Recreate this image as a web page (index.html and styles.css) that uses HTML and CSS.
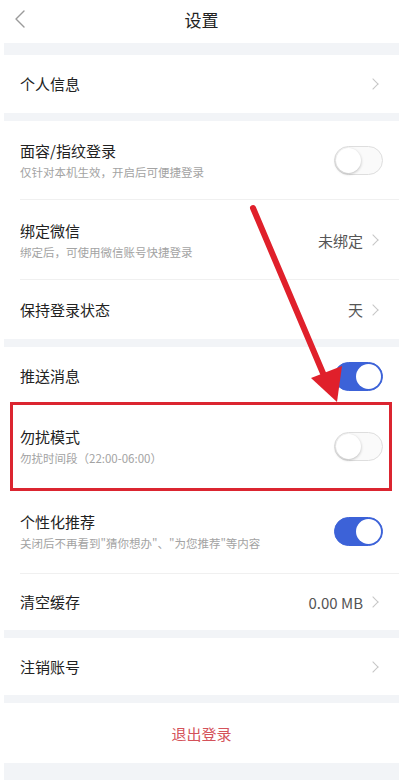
FILE: index.html
```html
<!DOCTYPE html>
<html lang="zh-CN">
<head>
<meta charset="utf-8">
<link rel="stylesheet" href="styles.css">
</head>
<body>
<div class="page">
  <header class="topbar">
    <svg class="back" width="12" height="20" viewBox="0 0 12 20"><path d="M10 2 L2 10 L10 18" fill="none" stroke="#9a9a9a" stroke-width="1.4" stroke-linecap="round" stroke-linejoin="round"/></svg>
    <div class="title">设置</div>
  </header>
  <div class="gap gap-top"></div>

  <div class="row h58">
    <div class="main"><div class="t">个人信息</div></div>
    <span class="chev"></span>
  </div>
  <div class="gap"></div>

  <div class="row h79 line">
    <div class="main"><div class="t">面容/指纹登录</div><div class="s">仅针对本机生效，开启后可便捷登录</div></div>
    <span class="toggle"></span>
  </div>
  <div class="row h80 line">
    <div class="main"><div class="t">绑定微信</div><div class="s">绑定后，可使用微信账号快捷登录</div></div>
    <span class="val">未绑定</span><span class="chev"></span>
  </div>
  <div class="row h59">
    <div class="main"><div class="t">保持登录状态</div></div>
    <span class="val">天</span><span class="chev"></span>
  </div>
  <div class="gap"></div>

  <div class="row h58">
    <div class="main"><div class="t">推送消息</div></div>
    <span class="toggle on"></span>
  </div>
  <div class="row h83">
    <div class="main"><div class="t">勿扰模式</div><div class="s">勿扰时间段（22:00-06:00）</div></div>
    <span class="toggle"></span>
  </div>
  <div class="row h86 line">
    <div class="main"><div class="t">个性化推荐</div><div class="s">关闭后不再看到"猜你想办"、"为您推荐"等内容</div></div>
    <span class="toggle on"></span>
  </div>
  <div class="row h56">
    <div class="main"><div class="t">清空缓存</div></div>
    <span class="val">0.00 MB</span><span class="chev"></span>
  </div>
  <div class="gap"></div>

  <div class="row h57">
    <div class="main"><div class="t">注销账号</div></div>
    <span class="chev"></span>
  </div>
  <div class="gap"></div>

  <div class="logout">退出登录</div>
  <div class="gap bottom"></div>

  <div class="markbox"></div>
  <svg class="arrow" width="399" height="780" viewBox="0 0 399 780">
    <line x1="253" y1="208" x2="328" y2="385" stroke="#e0202b" stroke-width="6" stroke-linecap="round"/>
    <polygon points="311,378 342,366 337,402" fill="#e0202b"/>
  </svg>
</div>
</body>
</html>
```

FILE: styles.css
```css
* { box-sizing: border-box; }
html, body { margin: 0; padding: 0; background: #fff; }
body {
  font-family: "Noto Sans CJK SC", "Noto Sans", sans-serif;
  color: #222;
}
.page {
  position: relative;
  width: 399px;
  height: 780px;
  overflow: hidden;
  padding-left: 4px;
}
.topbar {
  position: relative;
  height: 43px;
  display: flex;
  align-items: center;
  justify-content: center;
}
.back { position: absolute; left: 10px; top: 9px; }
.title { font-size: 17px; color: #222; margin-top: -4px; }
.gap { background: #f2f4f7; height: 8px; }
.gap-top { height: 12px; }
.bottom { height: 17px; }
.row {
  display: flex;
  align-items: center;
  padding: 0 16px 0 16px;
  position: relative;
  background: #fff;
}
.row.line::after {
  content: "";
  position: absolute;
  left: 16px;
  right: 0;
  bottom: 0;
  height: 1px;
  background: #f0f0f0;
}
.h56 { height: 56px; }
.h57 { height: 57px; }
.h58 { height: 58px; }
.h59 { height: 59px; }
.h79 { height: 79px; }
.h80 { height: 80px; }
.h83 { height: 83px; }
.h86 { height: 86px; }
.main { flex: 1; min-width: 0; }
.t { font-size: 15px; line-height: 20px; color: #222; }
.s { font-size: 11.5px; line-height: 15px; color: #a3a3a3; margin-top: 4px; white-space: nowrap; }
.val { font-size: 15px; color: #555; margin-right: 6px; }
.chev {
  width: 8px; height: 8px;
  border-top: 1.3px solid #c6c6c6;
  border-right: 1.3px solid #c6c6c6;
  transform: rotate(45deg);
  margin-right: 6px;
}
.toggle {
  position: relative;
  width: 49px;
  height: 29px;
  border-radius: 15px;
  border: 1px solid #dedede;
  background: #fafafa;
  flex-shrink: 0;
}
.toggle::after {
  content: "";
  position: absolute;
  left: 1px; top: 1px;
  width: 25px; height: 25px;
  border-radius: 50%;
  background: #fff;
  box-shadow: 0 1px 3px rgba(0,0,0,0.25);
}
.toggle.on { background: #3c62d8; border-color: #3c62d8; }
.toggle.on::after { left: auto; right: 1px; box-shadow: none; }
.logout {
  height: 60px;
  display: flex;
  align-items: center;
  justify-content: center;
  font-size: 15px;
  color: #d4525a;
}
.markbox {
  position: absolute;
  left: 10px; top: 402px;
  width: 382px; height: 89px;
  border: 3px solid #db2530;
}
.arrow { position: absolute; left: 0; top: 0; pointer-events: none; }
```
